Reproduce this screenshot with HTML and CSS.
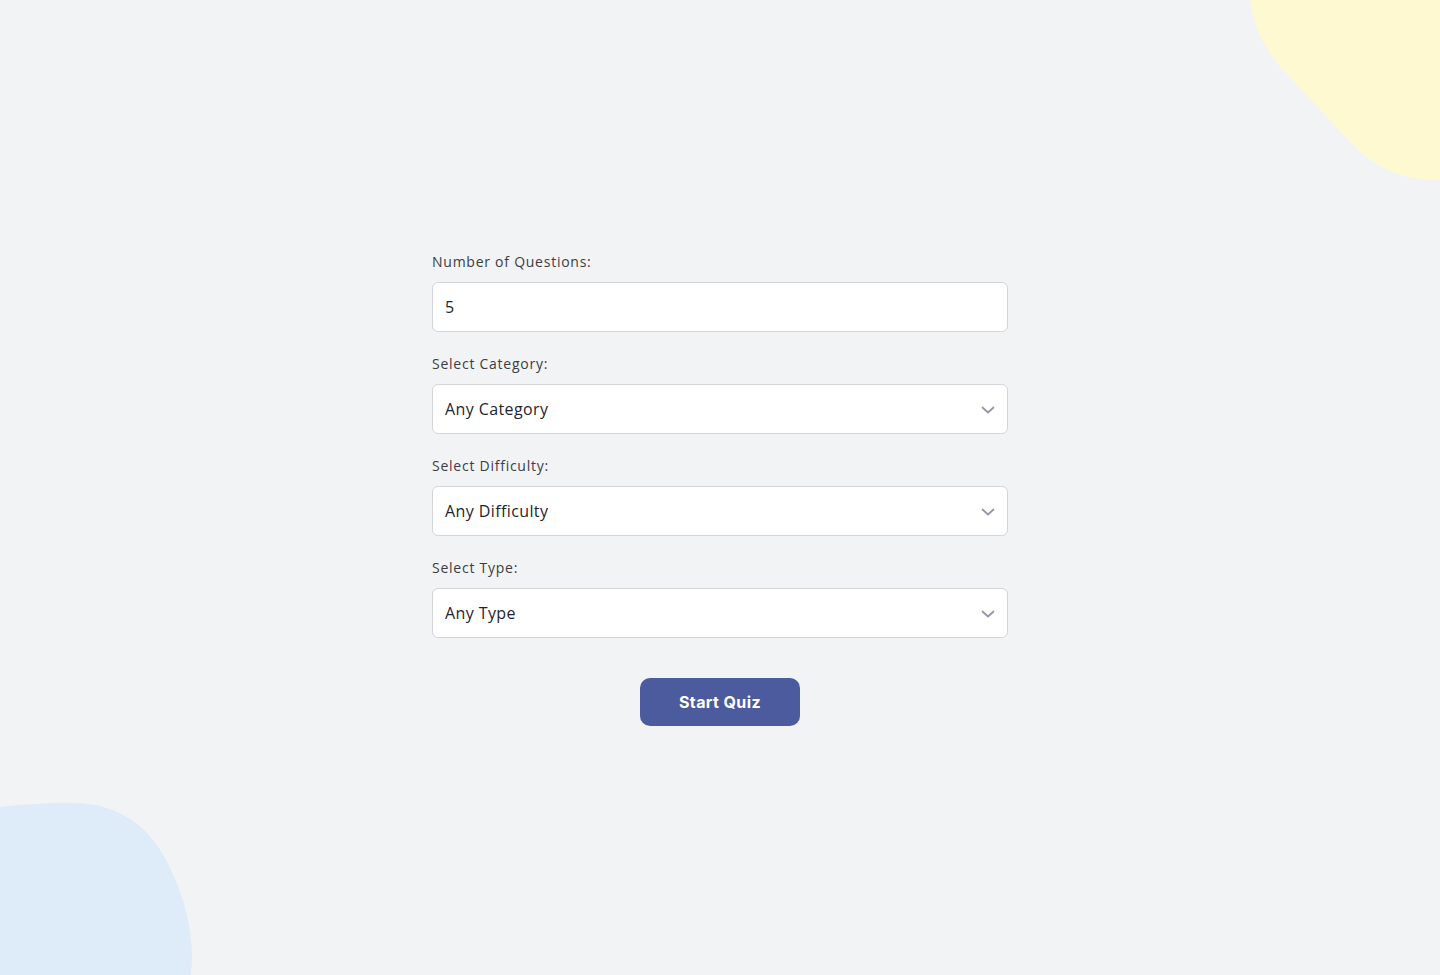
FILE: index.html
```html
<!DOCTYPE html>
<html lang="en">
<head>
<meta charset="utf-8">
<title>Quiz Setup</title>
<link rel="stylesheet" href="styles.css">
</head>
<body>
<svg class="blob blob-yellow" width="190" height="182" viewBox="0 0 190 182" aria-hidden="true">
  <path d="M0 0 H190 V180 C160 181 130 172 104 146 L35 72 C16 52 4 28 0 0 Z" fill="#fff9d1"/>
</svg>
<svg class="blob blob-blue" width="195" height="175" viewBox="0 0 195 175" aria-hidden="true">
  <path d="M0 7 C30 4 55 2 75 3 C115 4 145 22 165 58 C183 92 192 125 192 160 L191 175 H0 Z" fill="#deebf8"/>
</svg>
<main class="page">
  <form class="quiz-form">
    <div class="field">
      <label class="label" for="num">Number of Questions:</label>
      <input class="control" id="num" type="text" value="5">
    </div>
    <div class="field">
      <label class="label" for="cat">Select Category:</label>
      <div class="select-wrap">
        <select class="control" id="cat"><option>Any Category</option></select>
        <svg class="chevron" width="14" height="8" viewBox="0 0 14 8"><path d="M1.5 1.5 L7 6.5 L12.5 1.5" fill="none" stroke="#9397a4" stroke-width="1.8" stroke-linecap="round" stroke-linejoin="round"/></svg>
      </div>
    </div>
    <div class="field">
      <label class="label" for="dif">Select Difficulty:</label>
      <div class="select-wrap">
        <select class="control" id="dif"><option>Any Difficulty</option></select>
        <svg class="chevron" width="14" height="8" viewBox="0 0 14 8"><path d="M1.5 1.5 L7 6.5 L12.5 1.5" fill="none" stroke="#9397a4" stroke-width="1.8" stroke-linecap="round" stroke-linejoin="round"/></svg>
      </div>
    </div>
    <div class="field">
      <label class="label" for="typ">Select Type:</label>
      <div class="select-wrap">
        <select class="control" id="typ"><option>Any Type</option></select>
        <svg class="chevron" width="14" height="8" viewBox="0 0 14 8"><path d="M1.5 1.5 L7 6.5 L12.5 1.5" fill="none" stroke="#9397a4" stroke-width="1.8" stroke-linecap="round" stroke-linejoin="round"/></svg>
      </div>
    </div>
    <div class="actions">
      <button class="start-btn" type="button">Start Quiz</button>
    </div>
  </form>
</main>
</body>
</html>
```
FILE: styles.css
```css
html, body {
  margin: 0;
  padding: 0;
}
body {
  background: #f2f3f5;
  font-family: "Open Sans", "DejaVu Sans", sans-serif;
  color: #2b2f3a;
  min-height: 100vh;
  overflow: hidden;
  position: relative;
}
.blob {
  position: absolute;
  display: block;
}
.blob-yellow {
  top: 0;
  right: 0;
}
.blob-blue {
  left: 0;
  bottom: 0;
}
.page {
  position: relative;
  min-height: 975px;
  display: flex;
  align-items: center;
  justify-content: center;
  padding-top: 3px;
  box-sizing: border-box;
}
.quiz-form {
  width: 576px;
  display: flex;
  flex-direction: column;
  gap: 22px;
}
.field {
  display: flex;
  flex-direction: column;
  gap: 10px;
}
.label {
  font-size: 14px;
  line-height: 20px;
  color: #3a3d45;
  letter-spacing: 0.75px;
}
.select-wrap {
  position: relative;
}
.control {
  display: block;
  width: 100%;
  height: 50px;
  box-sizing: border-box;
  border: 1px solid #d3d5db;
  border-radius: 6px;
  background: #ffffff;
  padding: 0 12px;
  font-family: "Open Sans", "DejaVu Sans", sans-serif;
  font-size: 16px;
  letter-spacing: 0.4px;
  color: #1f2430;
  appearance: none;
  -webkit-appearance: none;
  outline: none;
}
.chevron {
  position: absolute;
  right: 13px;
  top: 22px;
  pointer-events: none;
}
.actions {
  display: flex;
  justify-content: center;
  padding-top: 18px;
}
.start-btn {
  width: 160px;
  height: 48px;
  border: none;
  border-radius: 10px;
  background: #4c5a9e;
  color: #ffffff;
  font-family: Inter, Roboto, sans-serif;
  font-weight: 700;
  font-size: 16px;
  letter-spacing: 0.4px;
  cursor: pointer;
}
```
